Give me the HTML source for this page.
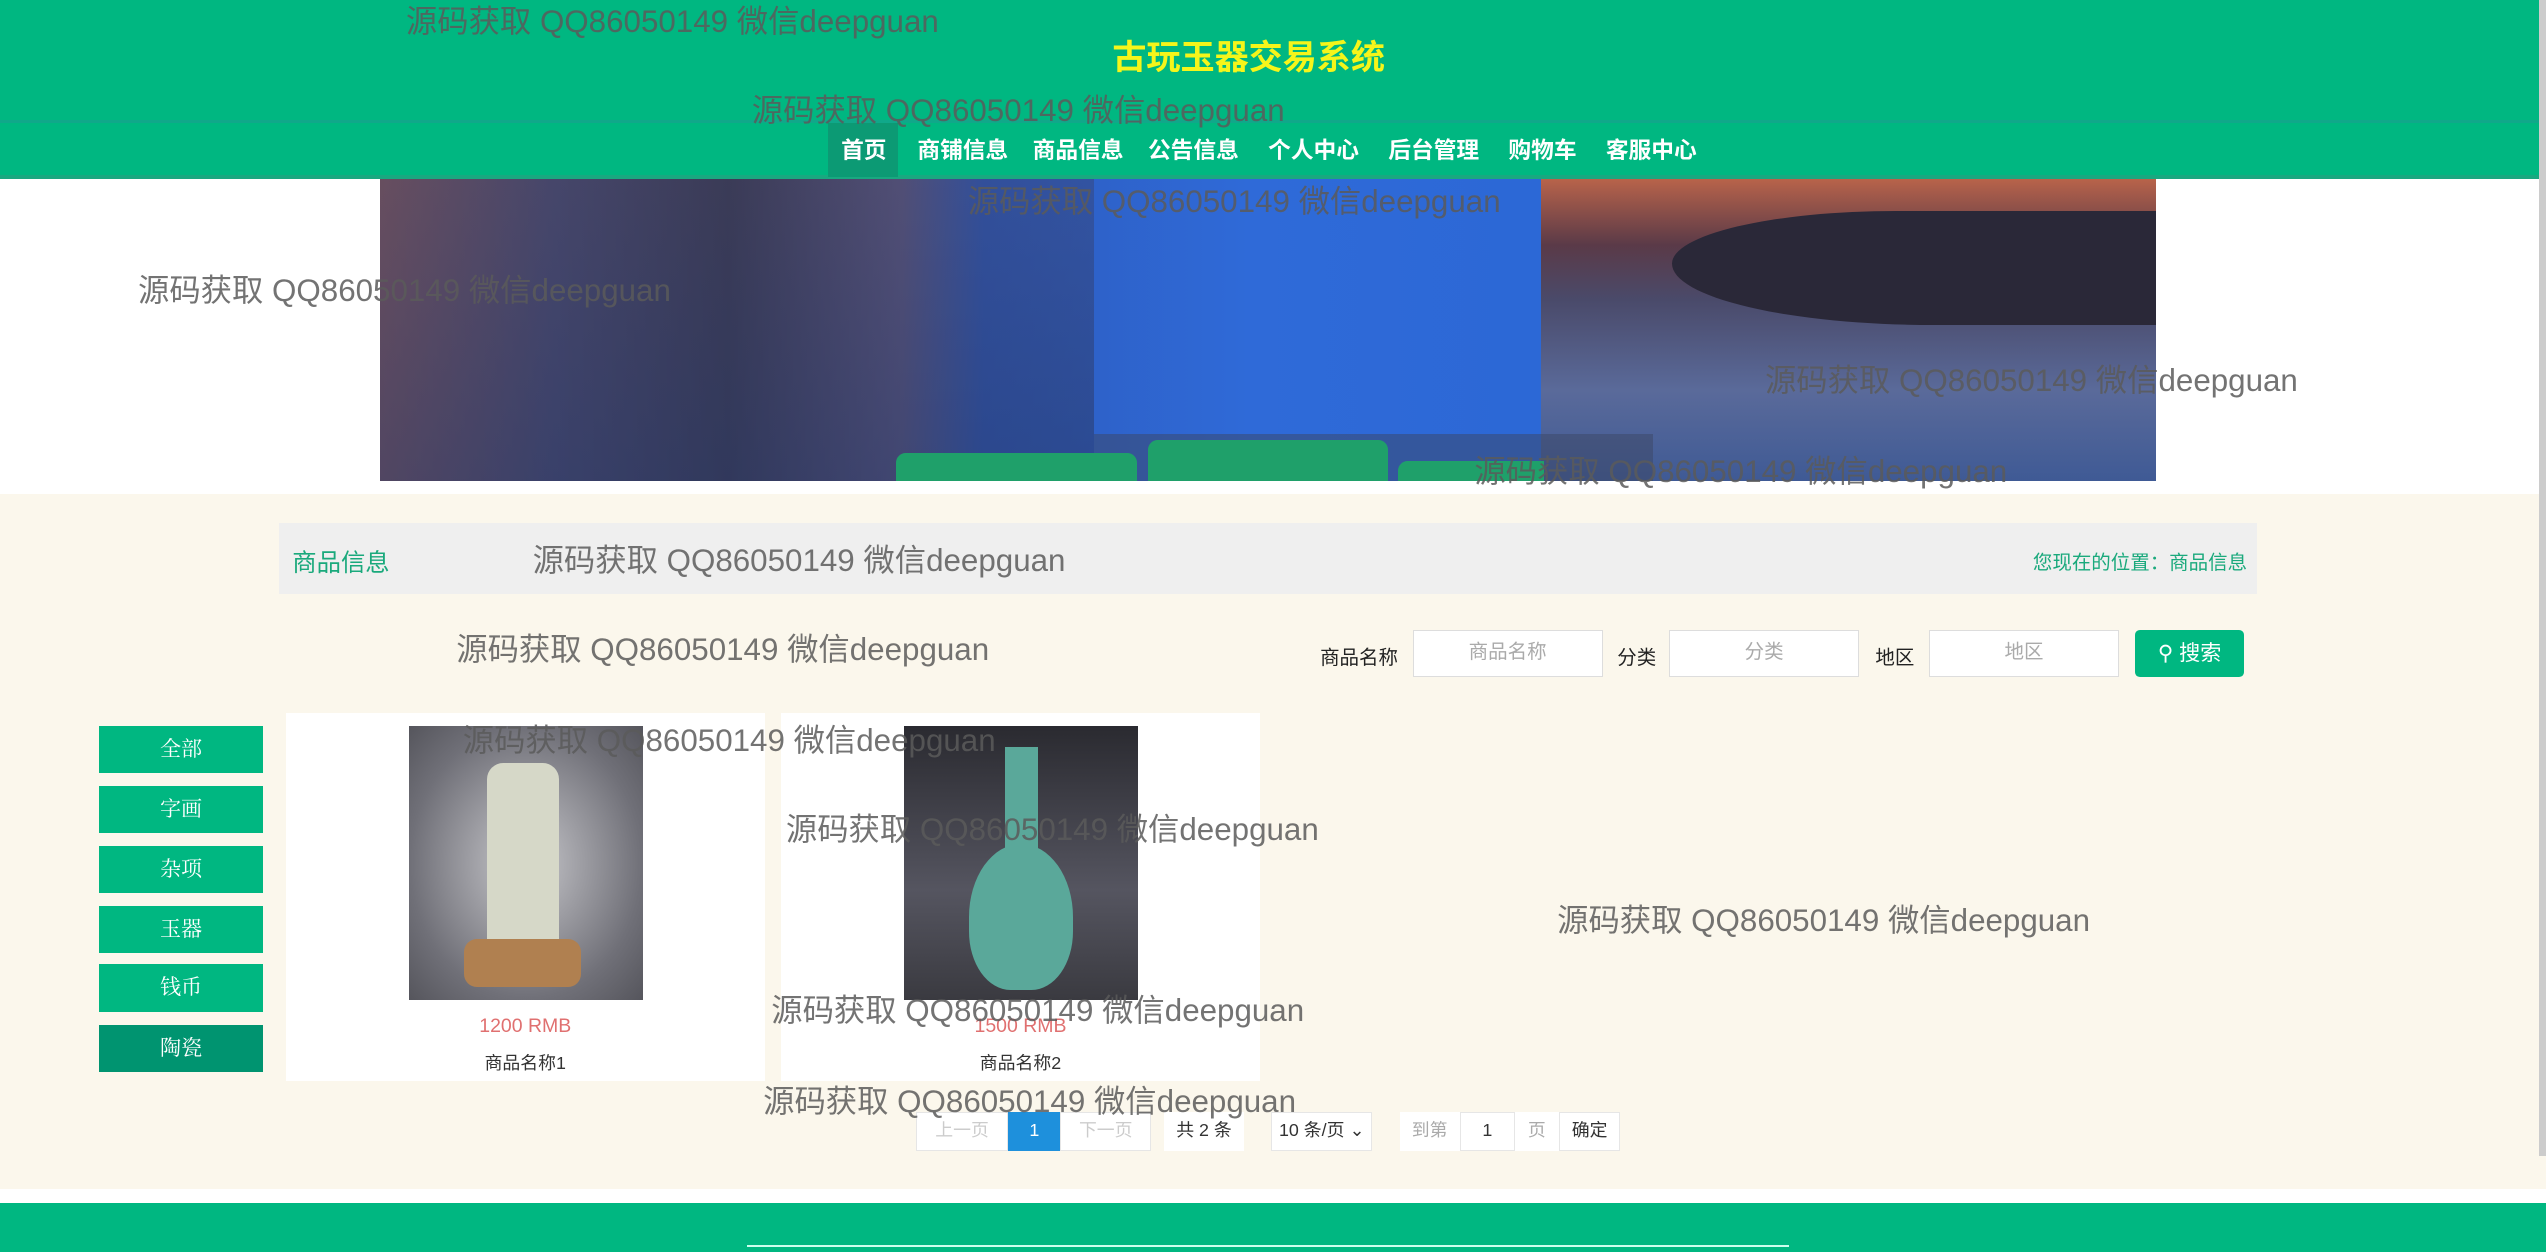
<!DOCTYPE html>
<html><head><meta charset="utf-8"><style>
html,body{margin:0;padding:0;width:2546px;height:1252px;overflow:hidden;background:#fff}
#w{zoom:1.62372;width:1568px;height:771px;position:relative;font-family:"Liberation Sans","Noto Sans CJK SC",sans-serif;overflow:hidden}
.a{position:absolute}
.wm{position:absolute;font-size:19.3px;color:rgba(90,90,90,.85);white-space:nowrap;z-index:10}
.nav span{position:absolute;top:81px;color:#fff;font-size:14px;font-weight:bold}
.lb{position:absolute;left:61px;width:101px;height:29px;background:#00b781;color:#fff;font-size:13px;text-align:center;line-height:29px;font-family:"Liberation Serif","Noto Serif CJK SC",serif}
.inp{position:absolute;top:388px;height:29px;width:117px;background:#fff;border:1px solid #ddd;box-sizing:border-box;color:#aaa;font-size:12px;text-align:center;line-height:27px}
.lab{position:absolute;top:395px;font-size:12px;color:#222}
.pg{position:absolute;top:685px;height:24px;background:#fff;border:1px solid #e6e6e6;box-sizing:border-box;font-size:11px;text-align:center;line-height:22px;color:#333}
</style></head><body><div id="w">
<div class="a" style="left:0;top:0;width:1568px;height:74px;background:#00b781"></div>
<div class="a" style="left:0;top:74px;width:1568px;height:2px;background:#10a88a"></div>
<div class="a" style="left:0;top:76px;width:1568px;height:33px;background:#00b781"></div>
<div class="a" style="left:0;top:108px;width:1568px;height:2px;background:#19a880"></div>
<div class="a" style="left:0;top:18px;width:1538px;text-align:center;color:#f5f51a;font-size:21px;font-weight:bold">古玩玉器交易系统</div>
<div class="a" style="left:510px;top:76px;width:43px;height:33px;background:#0c9a74"></div>
<div class="nav"><span style="left:518px">首页</span><span style="left:565px">商铺信息</span><span style="left:636px">商品信息</span><span style="left:707px">公告信息</span><span style="left:781px">个人中心</span><span style="left:855px">后台管理</span><span style="left:929px">购物车</span><span style="left:989px">客服中心</span></div>
<div class="a" style="left:234px;top:110px;width:715px;height:186px;background:linear-gradient(90deg,#7a5a6a 0,#4a4f7a 15%,#3a3f5e 30%,#5a5b8a 45%,#2e5cbf 52%,#2f6ad8 75%,#2c68d6 100%)"></div>
<div class="a" style="left:234px;top:110px;width:440px;height:186px;background:linear-gradient(180deg,rgba(60,50,70,.3),rgba(40,50,90,.5));"></div>
<div class="a" style="left:949px;top:110px;width:379px;height:186px;background:linear-gradient(180deg,#b8634a 0,#5a3a48 22%,#4a4a6a 40%,#5a6a9a 70%,#3f5a95 100%)"></div>
<div class="a" style="left:1030px;top:130px;width:298px;height:70px;background:#2a2838;border-radius:60% 0 0 70%"></div>
<div class="a" style="left:674px;top:267px;width:344px;height:29px;background:rgba(60,70,100,.5)"></div>
<div class="a" style="left:552px;top:279px;width:148px;height:17px;background:#1fa06a;border-radius:6px 6px 0 0"></div>
<div class="a" style="left:707px;top:271px;width:148px;height:25px;background:#1fa06a;border-radius:6px 6px 0 0"></div>
<div class="a" style="left:861px;top:284px;width:90px;height:12px;background:#1fa06a;border-radius:6px 0 0 0"></div>
<div class="a" style="left:0;top:304px;width:1568px;height:428px;background:#fbf7ec"></div>
<div class="a" style="left:0;top:741px;width:1568px;height:30px;background:#00b781"></div>
<div class="a" style="left:460px;top:767px;width:642px;height:1px;background:#cfe"></div>
<div class="a" style="left:172px;top:322px;width:1218px;height:44px;background:#efefef"></div>
<div class="a" style="left:180px;top:335px;color:#1aa97c;font-size:15px">商品信息</div>
<div class="a" style="left:1252px;top:336px;color:#1aa97c;font-size:12px">您现在的位置：商品信息</div>
<div class="lab" style="left:813px">商品名称</div><div class="inp" style="left:870px">商品名称</div>
<div class="lab" style="left:996px">分类</div><div class="inp" style="left:1028px">分类</div>
<div class="lab" style="left:1155px">地区</div><div class="inp" style="left:1188px">地区</div>
<div class="a" style="left:1315px;top:388px;width:67px;height:29px;background:#00b781;border-radius:3px;color:#fff;font-size:13px;line-height:29px;text-align:center">&#9906; 搜索</div>
<div class="lb" style="top:447px">全部</div><div class="lb" style="top:484px">字画</div><div class="lb" style="top:521px">杂项</div><div class="lb" style="top:558px">玉器</div><div class="lb" style="top:594px">钱币</div><div class="lb" style="top:631px;background:#009470">陶瓷</div>
<div class="a" style="left:176px;top:439px;width:295px;height:227px;background:#fff"></div>
<div class="a" style="left:481px;top:439px;width:295px;height:227px;background:#fff"></div>
<div class="a" style="left:252px;top:447px;width:144px;height:169px;background:radial-gradient(ellipse at 50% 50%,#c8c8cc,#707078 70%,#55555c)"></div>
<div class="a" style="left:300px;top:470px;width:44px;height:115px;background:#d6d8c8;border-radius:10px 10px 4px 4px"></div>
<div class="a" style="left:286px;top:578px;width:72px;height:30px;background:#b08050;border-radius:8px"></div>
<div class="a" style="left:557px;top:447px;width:144px;height:169px;background:linear-gradient(180deg,#2a2a30,#555560 60%,#3a3a40)"></div>
<div class="a" style="left:597px;top:520px;width:64px;height:90px;background:#5aa89a;border-radius:50% 50% 40% 40%"></div>
<div class="a" style="left:619px;top:460px;width:20px;height:70px;background:#5aa89a"></div>
<div class="a" style="left:176px;top:625px;width:295px;text-align:center;color:#e07070;font-size:12px">1200 RMB</div>
<div class="a" style="left:176px;top:646px;width:295px;text-align:center;color:#333;font-size:11px">商品名称1</div>
<div class="a" style="left:481px;top:625px;width:295px;text-align:center;color:#e07070;font-size:12px">1500 RMB</div>
<div class="a" style="left:481px;top:646px;width:295px;text-align:center;color:#333;font-size:11px">商品名称2</div>
<div class="pg" style="left:564px;width:57px;color:#ccc">上一页</div>
<div class="pg" style="left:621px;width:32px;background:#1e90dc;color:#fff;border-color:#1e90dc">1</div>
<div class="pg" style="left:653px;width:56px;color:#ccc">下一页</div>
<div class="pg" style="left:717px;width:49px;border-color:#fff">共 2 条</div>
<div class="pg" style="left:783px;width:62px">10 条/页 &#8964;</div>
<div class="pg" style="left:862px;width:37px;color:#aaa;border-color:#fff">到第</div>
<div class="pg" style="left:899px;width:34px">1</div>
<div class="pg" style="left:933px;width:27px;color:#aaa;border-color:#fff">页</div>
<div class="pg" style="left:960px;width:38px">确定</div>
<div class="a" style="left:1564px;top:0;width:4px;height:712px;background:#ccc"></div>
<div class="wm" style="left:250px;top:-2px">源码获取 QQ86050149 微信deepguan</div>
<div class="wm" style="left:463px;top:53px">源码获取 QQ86050149 微信deepguan</div>
<div class="wm" style="left:596px;top:109px">源码获取 QQ86050149 微信deepguan</div>
<div class="wm" style="left:85px;top:164px">源码获取 QQ86050149 微信deepguan</div>
<div class="wm" style="left:1087px;top:219px">源码获取 QQ86050149 微信deepguan</div>
<div class="wm" style="left:908px;top:275px">源码获取 QQ86050149 微信deepguan</div>
<div class="wm" style="left:328px;top:330px">源码获取 QQ86050149 微信deepguan</div>
<div class="wm" style="left:281px;top:385px">源码获取 QQ86050149 微信deepguan</div>
<div class="wm" style="left:285px;top:441px">源码获取 QQ86050149 微信deepguan</div>
<div class="wm" style="left:484px;top:496px">源码获取 QQ86050149 微信deepguan</div>
<div class="wm" style="left:959px;top:552px">源码获取 QQ86050149 微信deepguan</div>
<div class="wm" style="left:475px;top:607px">源码获取 QQ86050149 微信deepguan</div>
<div class="wm" style="left:470px;top:663px">源码获取 QQ86050149 微信deepguan</div>
</div></body></html>
